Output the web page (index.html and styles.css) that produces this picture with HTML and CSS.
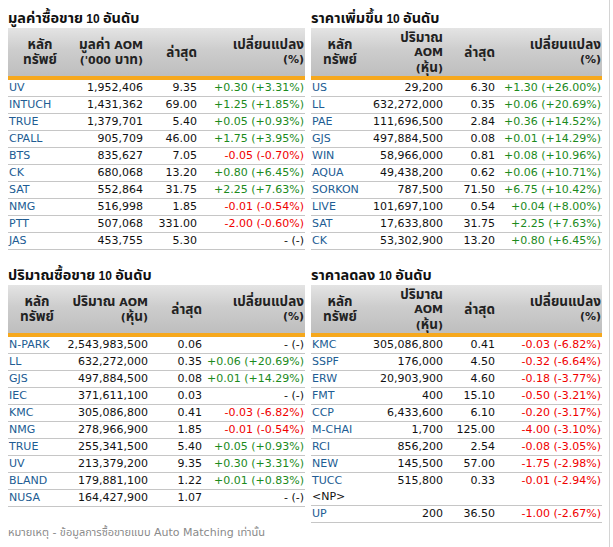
FILE: index.html
```html
<!DOCTYPE html>
<html lang="th">
<head>
<meta charset="utf-8">
<title>Top 10</title>
<link rel="stylesheet" href="styles.css">
</head>
<body>
<div class="page">
  <div class="grid">
    <section class="board">
      <h2 class="title"><span class="th">มูลค่าซื้อขาย</span> 10 <span class="th">อันดับ</span></h2>
      <table class="tbl tbl-value">
        <colgroup><col class="c1"><col class="c2"><col class="c3"><col class="c4"></colgroup>
        <thead><tr>
          <th class="h-sym"><div class="hc"><span class="th">หลัก</span><span class="th">ทรัพย์</span></div></th>
          <th><div class="hc"><span><span class="th">มูลค่า</span> AOM</span><span>('000 <span class="th">บาท</span>)</span></div></th>
          <th><div class="hc"><span class="th">ล่าสุด</span></div></th>
          <th><div class="hc"><span class="th">เปลี่ยนแปลง</span><span>(%)</span></div></th>
        </tr></thead>
        <tbody>
          <tr><td class="sym">UV</td><td>1,952,406</td><td>9.35</td><td class="up">+0.30 (+3.31%)</td></tr>
          <tr><td class="sym">INTUCH</td><td>1,431,362</td><td>69.00</td><td class="up">+1.25 (+1.85%)</td></tr>
          <tr><td class="sym">TRUE</td><td>1,379,701</td><td>5.40</td><td class="up">+0.05 (+0.93%)</td></tr>
          <tr><td class="sym">CPALL</td><td>905,709</td><td>46.00</td><td class="up">+1.75 (+3.95%)</td></tr>
          <tr><td class="sym">BTS</td><td>835,627</td><td>7.05</td><td class="down">-0.05 (-0.70%)</td></tr>
          <tr><td class="sym">CK</td><td>680,068</td><td>13.20</td><td class="up">+0.80 (+6.45%)</td></tr>
          <tr><td class="sym">SAT</td><td>552,864</td><td>31.75</td><td class="up">+2.25 (+7.63%)</td></tr>
          <tr><td class="sym">NMG</td><td>516,998</td><td>1.85</td><td class="down">-0.01 (-0.54%)</td></tr>
          <tr><td class="sym">PTT</td><td>507,068</td><td>331.00</td><td class="down">-2.00 (-0.60%)</td></tr>
          <tr><td class="sym">JAS</td><td>453,755</td><td>5.30</td><td>- (-)</td></tr>
        </tbody>
      </table>
    </section>

    <section class="board">
      <h2 class="title"><span class="th">ราคาเพิ่มขึ้น</span> 10 <span class="th">อันดับ</span></h2>
      <table class="tbl tbl-price">
        <colgroup><col class="c1"><col class="c2"><col class="c3"><col class="c4"></colgroup>
        <thead><tr>
          <th class="h-sym"><div class="hc"><span class="th">หลัก</span><span class="th">ทรัพย์</span></div></th>
          <th><div class="hc"><span class="th">ปริมาณ</span><span>AOM</span><span>(<span class="th">หุ้น</span>)</span></div></th>
          <th><div class="hc"><span class="th">ล่าสุด</span></div></th>
          <th><div class="hc"><span class="th">เปลี่ยนแปลง</span><span>(%)</span></div></th>
        </tr></thead>
        <tbody>
          <tr><td class="sym">US</td><td>29,200</td><td>6.30</td><td class="up">+1.30 (+26.00%)</td></tr>
          <tr><td class="sym">LL</td><td>632,272,000</td><td>0.35</td><td class="up">+0.06 (+20.69%)</td></tr>
          <tr><td class="sym">PAE</td><td>111,696,500</td><td>2.84</td><td class="up">+0.36 (+14.52%)</td></tr>
          <tr><td class="sym">GJS</td><td>497,884,500</td><td>0.08</td><td class="up">+0.01 (+14.29%)</td></tr>
          <tr><td class="sym">WIN</td><td>58,966,000</td><td>0.81</td><td class="up">+0.08 (+10.96%)</td></tr>
          <tr><td class="sym">AQUA</td><td>49,438,200</td><td>0.62</td><td class="up">+0.06 (+10.71%)</td></tr>
          <tr><td class="sym">SORKON</td><td>787,500</td><td>71.50</td><td class="up">+6.75 (+10.42%)</td></tr>
          <tr><td class="sym">LIVE</td><td>101,697,100</td><td>0.54</td><td class="up">+0.04 (+8.00%)</td></tr>
          <tr><td class="sym">SAT</td><td>17,633,800</td><td>31.75</td><td class="up">+2.25 (+7.63%)</td></tr>
          <tr><td class="sym">CK</td><td>53,302,900</td><td>13.20</td><td class="up">+0.80 (+6.45%)</td></tr>
        </tbody>
      </table>
    </section>

    <section class="board">
      <h2 class="title"><span class="th">ปริมาณซื้อขาย</span> 10 <span class="th">อันดับ</span></h2>
      <table class="tbl tbl-volume">
        <colgroup><col class="c1"><col class="c2"><col class="c3"><col class="c4"></colgroup>
        <thead><tr>
          <th class="h-sym"><div class="hc"><span class="th">หลัก</span><span class="th">ทรัพย์</span></div></th>
          <th><div class="hc"><span><span class="th">ปริมาณ</span> AOM</span><span>(<span class="th">หุ้น</span>)</span></div></th>
          <th><div class="hc"><span class="th">ล่าสุด</span></div></th>
          <th><div class="hc"><span class="th">เปลี่ยนแปลง</span><span>(%)</span></div></th>
        </tr></thead>
        <tbody>
          <tr><td class="sym">N-PARK</td><td>2,543,983,500</td><td>0.06</td><td>- (-)</td></tr>
          <tr><td class="sym">LL</td><td>632,272,000</td><td>0.35</td><td class="up">+0.06 (+20.69%)</td></tr>
          <tr><td class="sym">GJS</td><td>497,884,500</td><td>0.08</td><td class="up">+0.01 (+14.29%)</td></tr>
          <tr><td class="sym">IEC</td><td>371,611,100</td><td>0.03</td><td>- (-)</td></tr>
          <tr><td class="sym">KMC</td><td>305,086,800</td><td>0.41</td><td class="down">-0.03 (-6.82%)</td></tr>
          <tr><td class="sym">NMG</td><td>278,966,900</td><td>1.85</td><td class="down">-0.01 (-0.54%)</td></tr>
          <tr><td class="sym">TRUE</td><td>255,341,500</td><td>5.40</td><td class="up">+0.05 (+0.93%)</td></tr>
          <tr><td class="sym">UV</td><td>213,379,200</td><td>9.35</td><td class="up">+0.30 (+3.31%)</td></tr>
          <tr><td class="sym">BLAND</td><td>179,881,100</td><td>1.22</td><td class="up">+0.01 (+0.83%)</td></tr>
          <tr><td class="sym">NUSA</td><td>164,427,900</td><td>1.07</td><td>- (-)</td></tr>
        </tbody>
      </table>
    </section>

    <section class="board">
      <h2 class="title"><span class="th">ราคาลดลง</span> 10 <span class="th">อันดับ</span></h2>
      <table class="tbl tbl-price">
        <colgroup><col class="c1"><col class="c2"><col class="c3"><col class="c4"></colgroup>
        <thead><tr>
          <th class="h-sym"><div class="hc"><span class="th">หลัก</span><span class="th">ทรัพย์</span></div></th>
          <th><div class="hc"><span class="th">ปริมาณ</span><span>AOM</span><span>(<span class="th">หุ้น</span>)</span></div></th>
          <th><div class="hc"><span class="th">ล่าสุด</span></div></th>
          <th><div class="hc"><span class="th">เปลี่ยนแปลง</span><span>(%)</span></div></th>
        </tr></thead>
        <tbody>
          <tr><td class="sym">KMC</td><td>305,086,800</td><td>0.41</td><td class="down">-0.03 (-6.82%)</td></tr>
          <tr><td class="sym">SSPF</td><td>176,000</td><td>4.50</td><td class="down">-0.32 (-6.64%)</td></tr>
          <tr><td class="sym">ERW</td><td>20,903,900</td><td>4.60</td><td class="down">-0.18 (-3.77%)</td></tr>
          <tr><td class="sym">FMT</td><td>400</td><td>15.10</td><td class="down">-0.50 (-3.21%)</td></tr>
          <tr><td class="sym">CCP</td><td>6,433,600</td><td>6.10</td><td class="down">-0.20 (-3.17%)</td></tr>
          <tr><td class="sym">M-CHAI</td><td>1,700</td><td>125.00</td><td class="down">-4.00 (-3.10%)</td></tr>
          <tr><td class="sym">RCI</td><td>856,200</td><td>2.54</td><td class="down">-0.08 (-3.05%)</td></tr>
          <tr><td class="sym">NEW</td><td>145,500</td><td>57.00</td><td class="down">-1.75 (-2.98%)</td></tr>
          <tr><td class="sym">TUCC<br><span class="np">&lt;NP&gt;</span></td><td>515,800</td><td>0.33</td><td class="down">-0.01 (-2.94%)</td></tr>
          <tr><td class="sym">UP</td><td>200</td><td>36.50</td><td class="down">-1.00 (-2.67%)</td></tr>
        </tbody>
      </table>
    </section>
  </div>
  <p class="note">หมายเหตุ - ข้อมูลการซื้อขายแบบ Auto Matching เท่านั้น</p>
</div>
</body>
</html>
```

FILE: styles.css
```css
html, body {
  margin: 0;
  padding: 0;
  background: #ffffff;
}

body {
  font-family: "DejaVu Sans", "Noto Sans Thai", "Noto Sans", sans-serif;
  font-size: 11px;
  color: #111111;
}

.page {
  box-sizing: border-box;
  width: 610px;
  min-height: 547px;
  padding: 8px 0 0 8px;
  border-right: 1px solid #d4d4d4;
}

.grid {
  display: grid;
  grid-template-columns: 297px 291px;
  column-gap: 6px;
  row-gap: 15px;
  align-items: start;
}

.title {
  margin: 0;
  height: 20px;
  line-height: 20px;
  font-family: "Liberation Sans", "Noto Sans Thai", sans-serif;
  font-size: 12px;
  font-weight: bold;
  color: #111111;
  white-space: nowrap;
  overflow: hidden;
}

.title .th {
  font-size: 14.5px;
}

.tbl {
  width: 100%;
  table-layout: fixed;
  border-collapse: separate;
  border-spacing: 0;
}

.tbl-value .c1 { width: 64px; }
.tbl-value .c2 { width: 72px; }
.tbl-value .c3 { width: 54px; }
.tbl-value .c4 { width: 107px; }

.tbl-price .c1 { width: 58px; }
.tbl-price .c2 { width: 75px; }
.tbl-price .c3 { width: 52px; }
.tbl-price .c4 { width: 106px; }

.tbl-volume .c1 { width: 58px; }
.tbl-volume .c2 { width: 83px; }
.tbl-volume .c3 { width: 54px; }
.tbl-volume .c4 { width: 102px; }

.tbl th {
  padding: 0;
  font-weight: bold;
  font-size: 11px;
  color: #222222;
  background: linear-gradient(to bottom, #e4e4e4 0%, #cdcdcd 45%, #bebebe 100%);
  border-bottom: 4px solid #f6a81d;
}

.hc {
  box-sizing: border-box;
  height: 48px;
  display: flex;
  flex-direction: column;
  justify-content: center;
  align-items: flex-end;
  text-align: right;
  line-height: 15px;
  padding-right: 1px;
  white-space: nowrap;
  overflow: hidden;
}

.hc > span {
  display: block;
  height: 15px;
  line-height: 15px;
}

.hc .th {
  font-size: 13.5px;
}

.h-sym .hc {
  align-items: center;
  text-align: center;
  padding-right: 0;
}

.tbl td {
  padding: 0 1px;
  line-height: 16px;
  font-size: 11px;
  text-align: right;
  vertical-align: top;
  white-space: nowrap;
  color: #111111;
  border-bottom: 1px solid #c6c6c6;
}

.tbl td.sym {
  text-align: left;
  color: #215c93;
}

.tbl td.up {
  color: #1c8a1c;
}

.tbl td.down {
  color: #f00000;
}

.np {
  color: #111111;
}

.note {
  margin: 3px 0 0 0;
  line-height: 14px;
  font-size: 11px;
  color: #8a8a8a;
}
```
